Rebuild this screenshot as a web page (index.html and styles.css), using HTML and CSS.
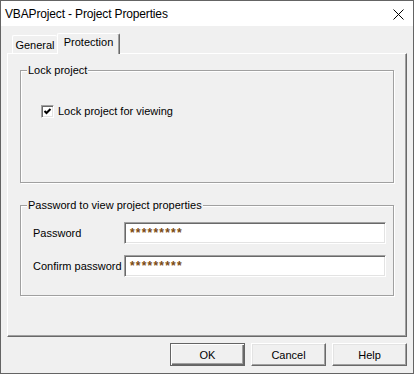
FILE: index.html
```html
<!doctype html>
<html lang="en">
  <head>
    <meta charset="UTF-8" />
    <title>VBAProject - Project Properties</title>
    <link rel="stylesheet" href="styles.css">
  </head>
  <body>
    <div class="window">
      <div class="titlebar">
        <span class="title">VBAProject - Project Properties</span>
        <svg class="close" width="11" height="11" viewBox="0 0 11 11">
          <path d="M0.5 0.5 L10.5 10.5 M10.5 0.5 L0.5 10.5" stroke="#000" stroke-width="1" fill="none" />
        </svg>
      </div>
      <div class="dialog">
        <div class="tabs">
          <div class="tab">General</div>
          <div class="tab active">Protection</div>
        </div>
        <div class="panel">
          <fieldset class="group lock-group">
            <legend>Lock project</legend>
            <label class="check-row">
              <span class="checkbox">
                <svg width="9" height="9" viewBox="0 0 9 9">
                  <path d="M1.5 4 L3.5 6 L7.5 2" stroke="#000" stroke-width="2" fill="none" />
                </svg>
              </span>
              Lock project for viewing
            </label>
          </fieldset>
          <fieldset class="group pwd-group">
            <legend>Password to view project properties</legend>
            <div class="field-row">
              <span class="field-label">Password</span>
              <span class="field-input">*********</span>
            </div>
            <div class="field-row">
              <span class="field-label">Confirm password</span>
              <span class="field-input">*********</span>
            </div>
          </fieldset>
        </div>
        <div class="buttons">
          <button class="btn default">OK</button>
          <button class="btn">Cancel</button>
          <button class="btn">Help</button>
        </div>
      </div>
    </div>
  </body>
</html>
```

FILE: styles.css
```css
html,
body {
  margin: 0;
  padding: 0;
}
body {
  font-family: "Liberation Sans", Arial, sans-serif;
  font-size: 11px;
  color: #000;
  background: #f0f0f0;
}
.window {
  width: 414px;
  height: 374px;
  box-sizing: border-box;
  border: 1px solid #646464;
  background: #f0f0f0;
  display: flex;
  flex-direction: column;
}
.titlebar {
  height: 25px;
  background: #fff;
  display: flex;
  align-items: center;
  justify-content: space-between;
  padding: 0 9px 0 4px;
}
.title {
  font-size: 12px;
  line-height: 14px;
  letter-spacing: -0.15px;
  padding-top: 1px;
}
.close {
  display: block;
  margin-top: 2px;
}
.dialog {
  padding: 7px 6px 0 6px;
}
.tabs {
  display: flex;
  align-items: flex-end;
  padding-left: 5px;
  height: 20px;
}
.tab {
  box-sizing: border-box;
  height: 18px;
  line-height: 15px;
  text-align: center;
  border-top: 1px solid #fff;
  border-left: 1px solid #fff;
  border-radius: 2px 2px 0 0;
  padding-top: 2px;
}
.tab:first-child {
  width: 45px;
}
.tab.active {
  width: 63px;
  height: 21px;
  margin-bottom: -1px;
  padding-top: 1px;
  border-right: 1px solid #696969;
  box-shadow: inset -1px 0 0 #a0a0a0;
  background: #f0f0f0;
  position: relative;
  z-index: 1;
}
.panel {
  box-sizing: border-box;
  height: 284px;
  border-top: 1px solid #fff;
  border-left: 1px solid #fff;
  border-right: 1px solid #696969;
  border-bottom: 1px solid #696969;
  box-shadow: inset -1px -1px 0 #a0a0a0;
  padding: 9px 12px 0 12px;
}
.group {
  box-sizing: border-box;
  margin: 0;
  padding: 0;
  border: 1px solid #a0a0a0;
  box-shadow: inset 1px 1px 0 #fff, 1px 1px 0 #fff;
}
.group legend {
  margin-left: 6px;
  padding: 0 1px;
  line-height: 14px;
  background: #f0f0f0;
}
.lock-group {
  height: 120px;
}
.pwd-group {
  height: 98px;
  margin-top: 15px;
}
.check-row {
  display: flex;
  align-items: center;
  gap: 4px;
  margin: 28px 0 0 20px;
  line-height: 13px;
}
.checkbox {
  box-sizing: border-box;
  width: 13px;
  height: 13px;
  background: #fff;
  border-top: 1px solid #a0a0a0;
  border-left: 1px solid #a0a0a0;
  border-right: 1px solid #fff;
  border-bottom: 1px solid #fff;
  box-shadow: inset 1px 1px 0 #696969, inset -1px -1px 0 #e3e3e3;
  display: flex;
  align-items: center;
  justify-content: center;
}
.checkbox svg {
  display: block;
}
.field-row {
  display: flex;
  align-items: center;
  margin-left: 12px;
}
.field-row:first-of-type {
  margin-top: 10px;
}
.field-row + .field-row {
  margin-top: 11px;
}
.field-label {
  flex: 0 0 91px;
}
.field-input {
  box-sizing: border-box;
  width: 262px;
  height: 22px;
  background: #fff;
  border-top: 1px solid #a0a0a0;
  border-left: 1px solid #a0a0a0;
  border-right: 1px solid #fff;
  border-bottom: 1px solid #fff;
  box-shadow: inset 1px 1px 0 #696969, inset -1px -1px 0 #e3e3e3;
  padding: 4px 0 0 5px;
  font-size: 12px;
  font-weight: bold;
  line-height: 12px;
  letter-spacing: 1.2px;
  color: #7a4a12;
}
.buttons {
  display: flex;
  justify-content: flex-end;
  gap: 6px;
  margin-top: 6px;
}
.btn {
  box-sizing: border-box;
  width: 75px;
  height: 23px;
  padding: 0;
  font-family: "Liberation Sans", Arial, sans-serif;
  font-size: 11px;
  color: #000;
  background: #f0f0f0;
  border: 1px solid;
  border-color: #fff #696969 #696969 #fff;
  box-shadow: inset -1px -1px 0 #a0a0a0, inset 1px 1px 0 #e3e3e3;
}
.btn.default {
  border-color: #646464;
  box-shadow: inset 1px 1px 0 #fff, inset -1px -1px 0 #696969, inset -2px -2px 0 #a0a0a0;
}
```
